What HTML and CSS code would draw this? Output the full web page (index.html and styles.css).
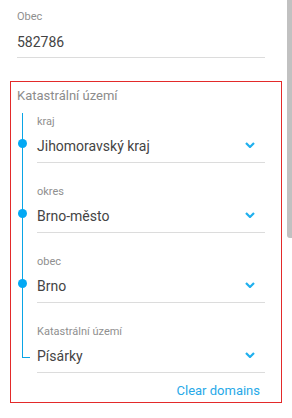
FILE: index.html
```html
<!DOCTYPE html>
<html lang="cs">
<head>
<meta charset="utf-8">
<title>Katastrální území</title>
<link rel="stylesheet" href="styles.css">
</head>
<body>
<div class="page">
  <div class="field top-field">
    <div class="label">Obec</div>
    <div class="value">582786</div>
  </div>

  <div class="domains">
    <div class="legend">Katastrální území</div>
    <div class="chain">
      <div class="step dot">
        <div class="label">kraj</div>
        <div class="select"><span class="value">Jihomoravský kraj</span><svg class="chev" width="10" height="6" viewBox="0 0 10 6"><polyline points="1,1 5,5 9,1"/></svg></div>
      </div>
      <div class="step dot">
        <div class="label">okres</div>
        <div class="select"><span class="value">Brno-město</span><svg class="chev" width="10" height="6" viewBox="0 0 10 6"><polyline points="1,1 5,5 9,1"/></svg></div>
      </div>
      <div class="step dot">
        <div class="label">obec</div>
        <div class="select"><span class="value">Brno</span><svg class="chev" width="10" height="6" viewBox="0 0 10 6"><polyline points="1,1 5,5 9,1"/></svg></div>
      </div>
      <div class="step">
        <div class="label">Katastrální území</div>
        <div class="select"><span class="value">Písárky</span><svg class="chev" width="10" height="6" viewBox="0 0 10 6"><polyline points="1,1 5,5 9,1"/></svg></div>
      </div>
    </div>
    <div class="actions"><a class="clear" href="#">Clear domains</a></div>
  </div>
</div>
<div class="scrollbar"></div>
</body>
</html>
```
FILE: styles.css
```css
html, body {
  margin: 0;
  padding: 0;
  background: #fff;
}
body {
  font-family: Roboto, "Liberation Sans", sans-serif;
  color: #444;
  width: 292px;
  height: 418px;
  overflow: hidden;
}
.page {
  width: 282px;
  padding-top: 10px;
}
.label {
  font-size: 11px;
  line-height: 14px;
  color: #8f8f8f;
}
.value {
  font-size: 14px;
  line-height: 20px;
  color: #444;
}
.top-field {
  margin-left: 17px;
  width: 248px;
  border-bottom: 1px solid #dcdcdc;
  padding-bottom: 5px;
}
.top-field .value {
  margin-top: 8px;
}
.domains {
  margin: 23px 0 0 10px;
  width: 272px;
  box-sizing: border-box;
  border: 1px solid #e32a2a;
  padding: 6px 16px 3px 26px;
}
.legend {
  margin-left: -20px;
  font-size: 13px;
  line-height: 16px;
  color: #8c8c8c;
}
.chain {
  position: relative;
  margin-top: 11px;
  display: flex;
  flex-direction: column;
  gap: 22px;
}
.chain::before {
  content: "";
  position: absolute;
  left: -15px;
  top: -2px;
  width: 8px;
  height: 245px;
  box-sizing: border-box;
  border-left: 1px solid #0aa5e6;
  border-bottom: 1px solid #0aa5e6;
}
.step {
  position: relative;
  border-bottom: 1px solid #dcdcdc;
  padding-bottom: 6px;
}
.step.dot::after {
  content: "";
  position: absolute;
  left: -19px;
  top: 24px;
  width: 9px;
  height: 9px;
  border-radius: 50%;
  background: #03a9f4;
}
.select {
  margin-top: 7px;
  display: flex;
  align-items: center;
  justify-content: space-between;
  padding-right: 10px;
}
.chev {
  display: block;
  margin-top: -2px;
}
.chev polyline {
  fill: none;
  stroke: #1fb0ee;
  stroke-width: 2.2;
}
.actions {
  margin-top: 10px;
  display: flex;
  justify-content: flex-end;
  padding-right: 5px;
}
.clear {
  font-size: 13px;
  line-height: 16px;
  color: #27a9e8;
  text-decoration: none;
}
.scrollbar {
  position: fixed;
  top: 0;
  right: 0;
  width: 5px;
  height: 238px;
  background: #c1c1c1;
  border-bottom-left-radius: 3px;
}
```
